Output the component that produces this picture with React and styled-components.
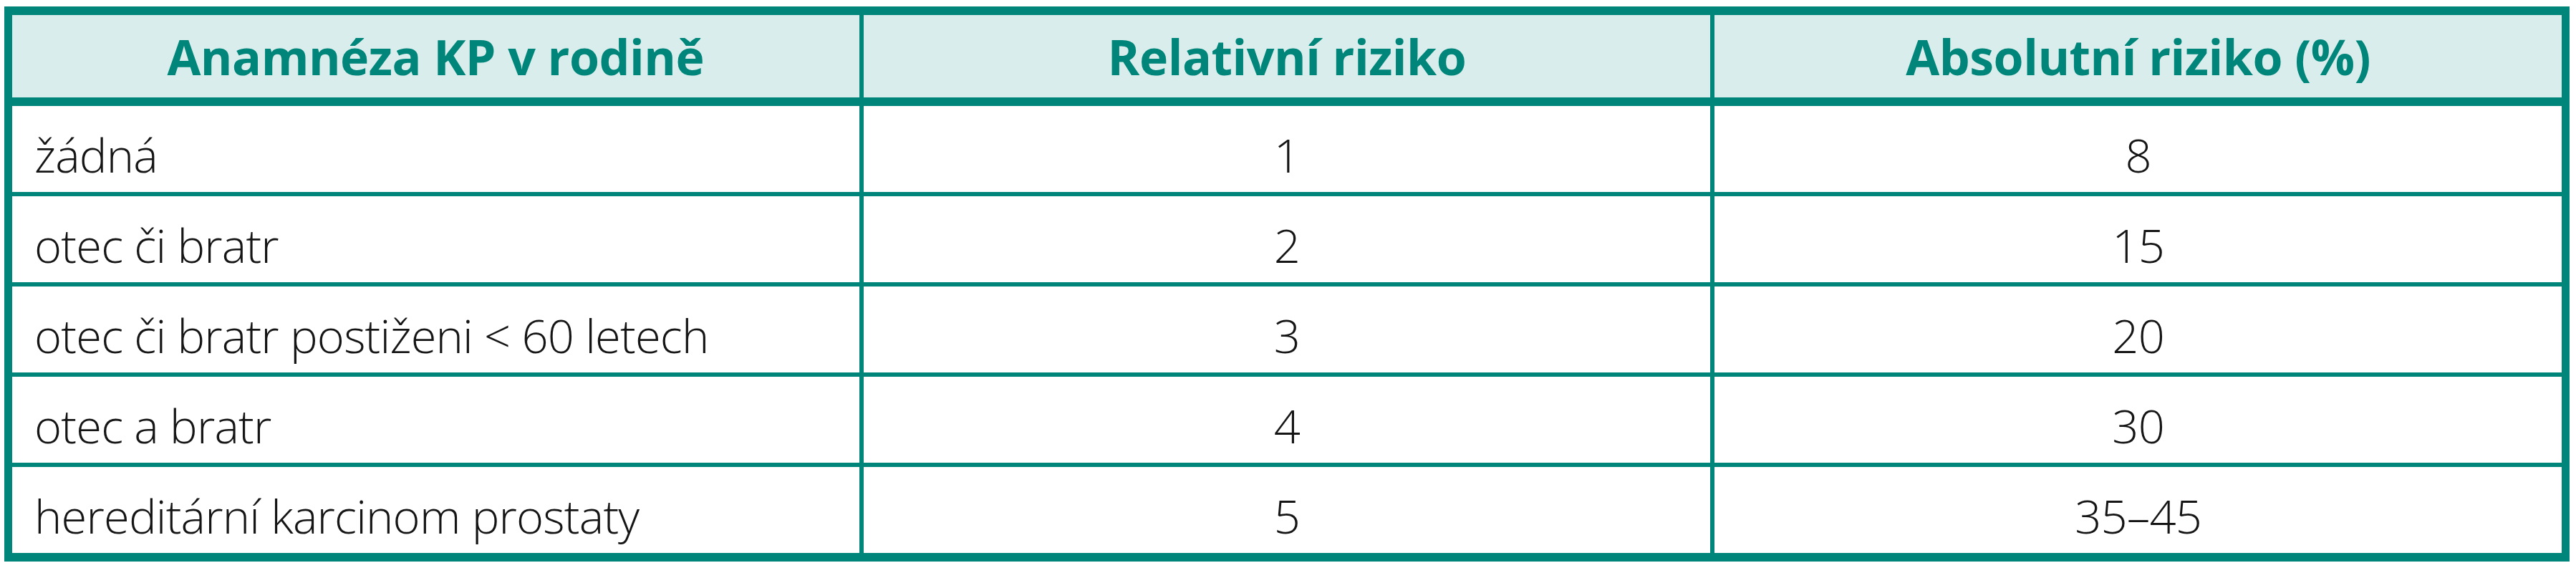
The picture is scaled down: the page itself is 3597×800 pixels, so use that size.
import styled, { createGlobalStyle } from 'styled-components'

const TEAL = '#00857a'

const Global = createGlobalStyle`
  html, body { margin: 0; background: #fff; }
  body { font-family: "Open Sans", "Noto Sans", sans-serif; }
`

const Page = styled.div`
  padding: 9px 0 0 6px;
`

const Table = styled.div`
  width: 3582px;
  box-sizing: border-box;
  border: 11px solid ${TEAL};
  border-top-width: 12px;
  border-bottom-width: 12px;
  background: ${TEAL};
  display: flex;
  flex-direction: column;
  gap: 6px;
`

const Row = styled.div`
  display: grid;
  grid-template-columns: repeat(3, 1fr);
  column-gap: 6px;
  height: ${p => (p.$head ? '115px' : '120px')};
  margin-bottom: ${p => (p.$head ? '6px' : '0')};
`

const HeadCell = styled.div`
  background: #d9eeec;
  display: flex;
  align-items: center;
  justify-content: center;
  color: ${TEAL};
  font-weight: 700;
  font-size: 68px;
  letter-spacing: -0.5px;
  white-space: nowrap;
`

const Cell = styled.div`
  background: #fff;
  display: flex;
  align-items: center;
  justify-content: ${p => (p.$left ? 'flex-start' : 'center')};
  padding: 16px 0 0 ${p => (p.$left ? '31px' : '0')};
  color: #151515;
  font-size: 65px;
  font-weight: 350;
  letter-spacing: -0.8px;
  white-space: nowrap;
`

const rows = [
  ['žádná', '1', '8'],
  ['otec či bratr', '2', '15'],
  ['otec či bratr postiženi < 60 letech', '3', '20'],
  ['otec a bratr', '4', '30'],
  ['hereditární karcinom prostaty', '5', '35–45'],
]

export default function App() {
  return (
    <>
      <Global />
      <Page>
        <Table>
          <Row $head>
            <HeadCell>Anamnéza KP v rodině</HeadCell>
            <HeadCell>Relativní riziko</HeadCell>
            <HeadCell>Absolutní riziko (%)</HeadCell>
          </Row>
          {rows.map(([label, rel, abs]) => (
            <Row key={label}>
              <Cell $left>{label}</Cell>
              <Cell>{rel}</Cell>
              <Cell>{abs}</Cell>
            </Row>
          ))}
        </Table>
      </Page>
    </>
  )
}
